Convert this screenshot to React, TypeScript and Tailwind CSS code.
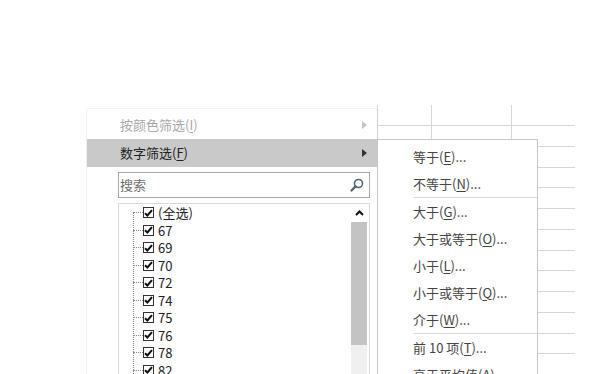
import type { ReactNode } from "react";

const font = { fontFamily: '"Noto Sans CJK SC", "Noto Sans", sans-serif' };

const values = ["67", "69", "70", "72", "74", "75", "76", "78", "82", "84"];

function Key({ children }: { children: ReactNode }) {
  return <span className="underline underline-offset-2">{children}</span>;
}

function Arrow({ muted }: { muted?: boolean }) {
  return (
    <svg width="5" height="8" viewBox="0 0 5 8" className={muted ? "text-[#c4c4c4]" : "text-[#333]"}>
      <path d="M0 0 L5 4 L0 8 Z" fill="currentColor" />
    </svg>
  );
}

function Check() {
  return (
    <span className="flex h-[11px] w-[11px] shrink-0 items-center justify-center border border-[#333] bg-white">
      <svg width="9" height="8" viewBox="0 0 9 8">
        <path d="M1 4.2 L3.4 6.5 L8 1.2" fill="none" stroke="#111" strokeWidth="2" />
      </svg>
    </span>
  );
}

function TreeRow({ label }: { label: string }) {
  return (
    <div className="flex h-[17.5px] items-center">
      <span className="w-[10px] border-t border-dotted border-[#888]" />
      <Check />
      <span className="ml-[4px] text-[13px] leading-none text-[#222]">{label}</span>
    </div>
  );
}

function SubItem({ children }: { children: ReactNode }) {
  return (
    <div className="flex h-[27px] items-center pl-[35px] text-[13px] text-[#444]">{children}</div>
  );
}

function Grid() {
  const rows = Array.from({ length: 13 });
  return (
    <div className="pl-[377px] pt-[105px]">
      <div className="w-[198px]">
        <div className="flex h-[20px]">
          <div className="w-[54px] border-l border-[#d6d6d6]" />
          <div className="w-[80px] border-l border-[#d6d6d6]" />
          <div className="w-[64px] border-l border-[#d6d6d6]" />
        </div>
        {rows.map((_, i) => (
          <div key={i} className="flex h-[20.75px] border-t border-[#d6d6d6]">
            <div className="w-[54px] border-l border-[#d6d6d6]" />
            <div className="w-[80px] border-l border-[#d6d6d6]" />
            <div className="w-[64px] border-l border-[#d6d6d6]" />
          </div>
        ))}
      </div>
    </div>
  );
}

export default function App() {
  return (
    <div className="relative h-[374px] w-[592px] overflow-hidden bg-white" style={font}>
      <Grid />

      {/* main filter menu */}
      <div className="absolute left-[86px] top-[108px] h-[300px] w-[292px] border border-[#f2f2f2] border-r-[#d0d0d0] bg-white pt-[2px]">
        <div className="flex h-[28px] items-center justify-between pl-[33px] pr-[10px] text-[13px] text-[#a8a8a8]">
          <span>
            按颜色筛选(<Key>I</Key>)
          </span>
          <Arrow muted />
        </div>
        <div className="flex h-[28px] items-center justify-between bg-[#c9c9c9] pl-[33px] pr-[10px] text-[13px] text-[#222]">
          <span>
            数字筛选(<Key>F</Key>)
          </span>
          <Arrow />
        </div>

        <div className="ml-[31px] mt-[5px] flex h-[26px] w-[252px] items-center justify-between border border-[#a9a9a9] pl-[1px] pr-[5px]">
          <span className="text-[13px] text-[#6f6f6f]">搜索</span>
          <svg width="14" height="14" viewBox="0 0 14 14">
            <circle cx="8.5" cy="5.5" r="4" fill="none" stroke="#4f6670" strokeWidth="1.6" />
            <path d="M5.6 8.4 L1.5 12.5" stroke="#4f6670" strokeWidth="2.2" strokeLinecap="round" />
          </svg>
        </div>

        <div className="ml-[31px] mt-[5px] flex h-[200px] w-[252px] border border-[#dadada]">
          <div className="relative flex-1 pl-[14px]">
            <div className="absolute bottom-0 left-[14px] top-[8px] border-l border-dotted border-[#888]" />
            <TreeRow label="(全选)" />
            {values.map((v) => (
              <TreeRow key={v} label={v} />
            ))}
          </div>
          <div className="mr-[2px] flex w-[16px] flex-col bg-[#f0f0f0]">
            <div className="flex h-[18px] items-center justify-center bg-white">
              <svg width="9" height="6" viewBox="0 0 9 6">
                <path d="M1 5 L4.5 1.5 L8 5" fill="none" stroke="#111" strokeWidth="2" />
              </svg>
            </div>
            <div className="h-[123px] bg-[#c3c3c3]" />
          </div>
        </div>
      </div>

      {/* number filter submenu */}
      <div className="absolute left-[377px] top-[139px] h-[260px] w-[161px] border border-[#c8c8c8] bg-white pt-[3px]">
        <SubItem>
          等于(<Key>E</Key>)...
        </SubItem>
        <SubItem>
          不等于(<Key>N</Key>)...
        </SubItem>
        <div className="ml-[35px] border-t border-[#d9d9d9]" />
        <SubItem>
          大于(<Key>G</Key>)...
        </SubItem>
        <SubItem>
          大于或等于(<Key>O</Key>)...
        </SubItem>
        <SubItem>
          小于(<Key>L</Key>)...
        </SubItem>
        <SubItem>
          小于或等于(<Key>Q</Key>)...
        </SubItem>
        <SubItem>
          介于(<Key>W</Key>)...
        </SubItem>
        <div className="ml-[35px] border-t border-[#d9d9d9]" />
        <SubItem>
          前 10 项(<Key>T</Key>)...
        </SubItem>
        <SubItem>
          高于平均值(<Key>A</Key>)
        </SubItem>
      </div>
    </div>
  );
}
